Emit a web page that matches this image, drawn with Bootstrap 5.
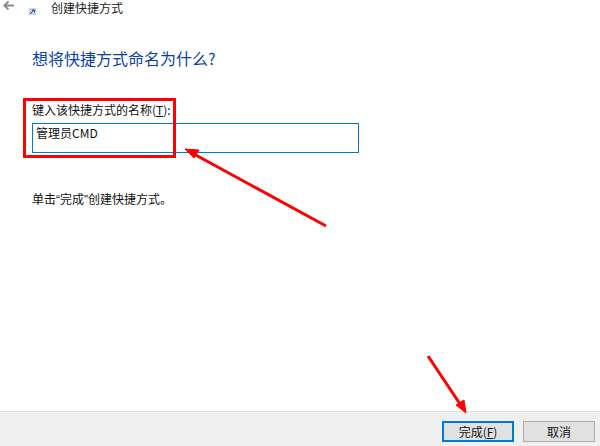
<!DOCTYPE html>
<html lang="zh-CN">
<head>
<meta charset="utf-8">
<title>创建快捷方式</title>
<link href="https://cdn.jsdelivr.net/npm/bootstrap@5.3.0/dist/css/bootstrap.min.css" rel="stylesheet">
<style>
html,body{height:446px;overflow:hidden;}
body{font-family:"Noto Sans CJK SC","Liberation Sans",sans-serif;font-size:12px;color:#111;background:#fff;position:relative;}
.wiz{height:446px;}
.topbar{height:17px;padding-left:2px;}
.backic{width:13px;height:12px;margin-top:0;}
.shortic{width:7px;height:7px;margin-left:14px;margin-top:8px;}
.wintitle{margin-left:15px;font-size:12px;line-height:15px;color:#222;}
.mainarea{padding:31px 0 0 32px;}
.headline{font-size:16px;line-height:20px;color:#0a3fa5;margin:0 0 36px;font-weight:400;}
.fieldlabel{line-height:14px;margin-bottom:6px;display:block;margin-top:-1px;}
.namebox{width:327px;height:30px;border:1px solid #0078d7;border-radius:0;padding:0 3px 12px;font-size:12px;line-height:15px;color:#111;box-shadow:none;}
.hint{margin:39px 0 0;line-height:14px;}
.qt{font-family:"Liberation Sans",sans-serif;}
.footbar{height:35px;background:#f0f0f0;border-top:1px solid #dfdfdf;padding:9px 5px 0 0;}
.wbtn{width:72px;height:21px;padding:0;border-radius:0;font-size:12px;line-height:17px;color:#111;background:#e1e1e1;border:1px solid #adadad;}
.wbtn.isdefault{border:2px solid #0078d7;line-height:16px;}
.footgap{gap:9px;}
.markup{position:absolute;left:0;top:0;width:600px;height:446px;pointer-events:none;}
</style>
</head>
<body>
<div class="wiz d-flex flex-column">
  <div class="topbar d-flex align-items-start">
    <svg class="backic" viewBox="0 0 14 12"><path d="M13 5.5H3M7 1 2.5 5.5 7 10" fill="none" stroke="#8a8a8a" stroke-width="2"/></svg>
    <svg class="shortic" viewBox="0 0 7 7"><rect width="7" height="7" fill="#c9d4e8"/><path d="M1 6 5 2M3 2h2.5v2.5" stroke="#23408c" fill="none"/></svg>
    <div class="wintitle">创建快捷方式</div>
  </div>
  <div class="mainarea flex-grow-1">
    <h1 class="headline">想将快捷方式命名为什么?</h1>
    <label class="fieldlabel" for="nm">键入该快捷方式的名称(<u>T</u>):</label>
    <input id="nm" class="form-control namebox" value="管理员CMD">
    <p class="hint">单击<span class="qt">“</span>完成<span class="qt">”</span>创建快捷方式。</p>
  </div>
  <div class="footbar d-flex justify-content-end footgap">
    <button class="btn wbtn isdefault">完成(<u>F</u>)</button>
    <button class="btn wbtn">取消</button>
  </div>
</div>
<svg class="markup" viewBox="0 0 600 446">
  <rect x="24.5" y="99.5" width="150" height="57" fill="none" stroke="#f00" stroke-width="3"/>
  <path d="M326 226 192 153" stroke="#f00" stroke-width="3" fill="none"/>
  <path d="M185 149 199 150 194 158Z" fill="#f00" stroke="#f00"/>
  <path d="M428 356 462 407" stroke="#f00" stroke-width="3" fill="none"/>
  <path d="M466 413 456 405 464 400Z" fill="#f00" stroke="#f00"/>
</svg>
<script src="https://cdn.jsdelivr.net/npm/bootstrap@5.3.0/dist/js/bootstrap.bundle.min.js"></script>
</body>
</html>
